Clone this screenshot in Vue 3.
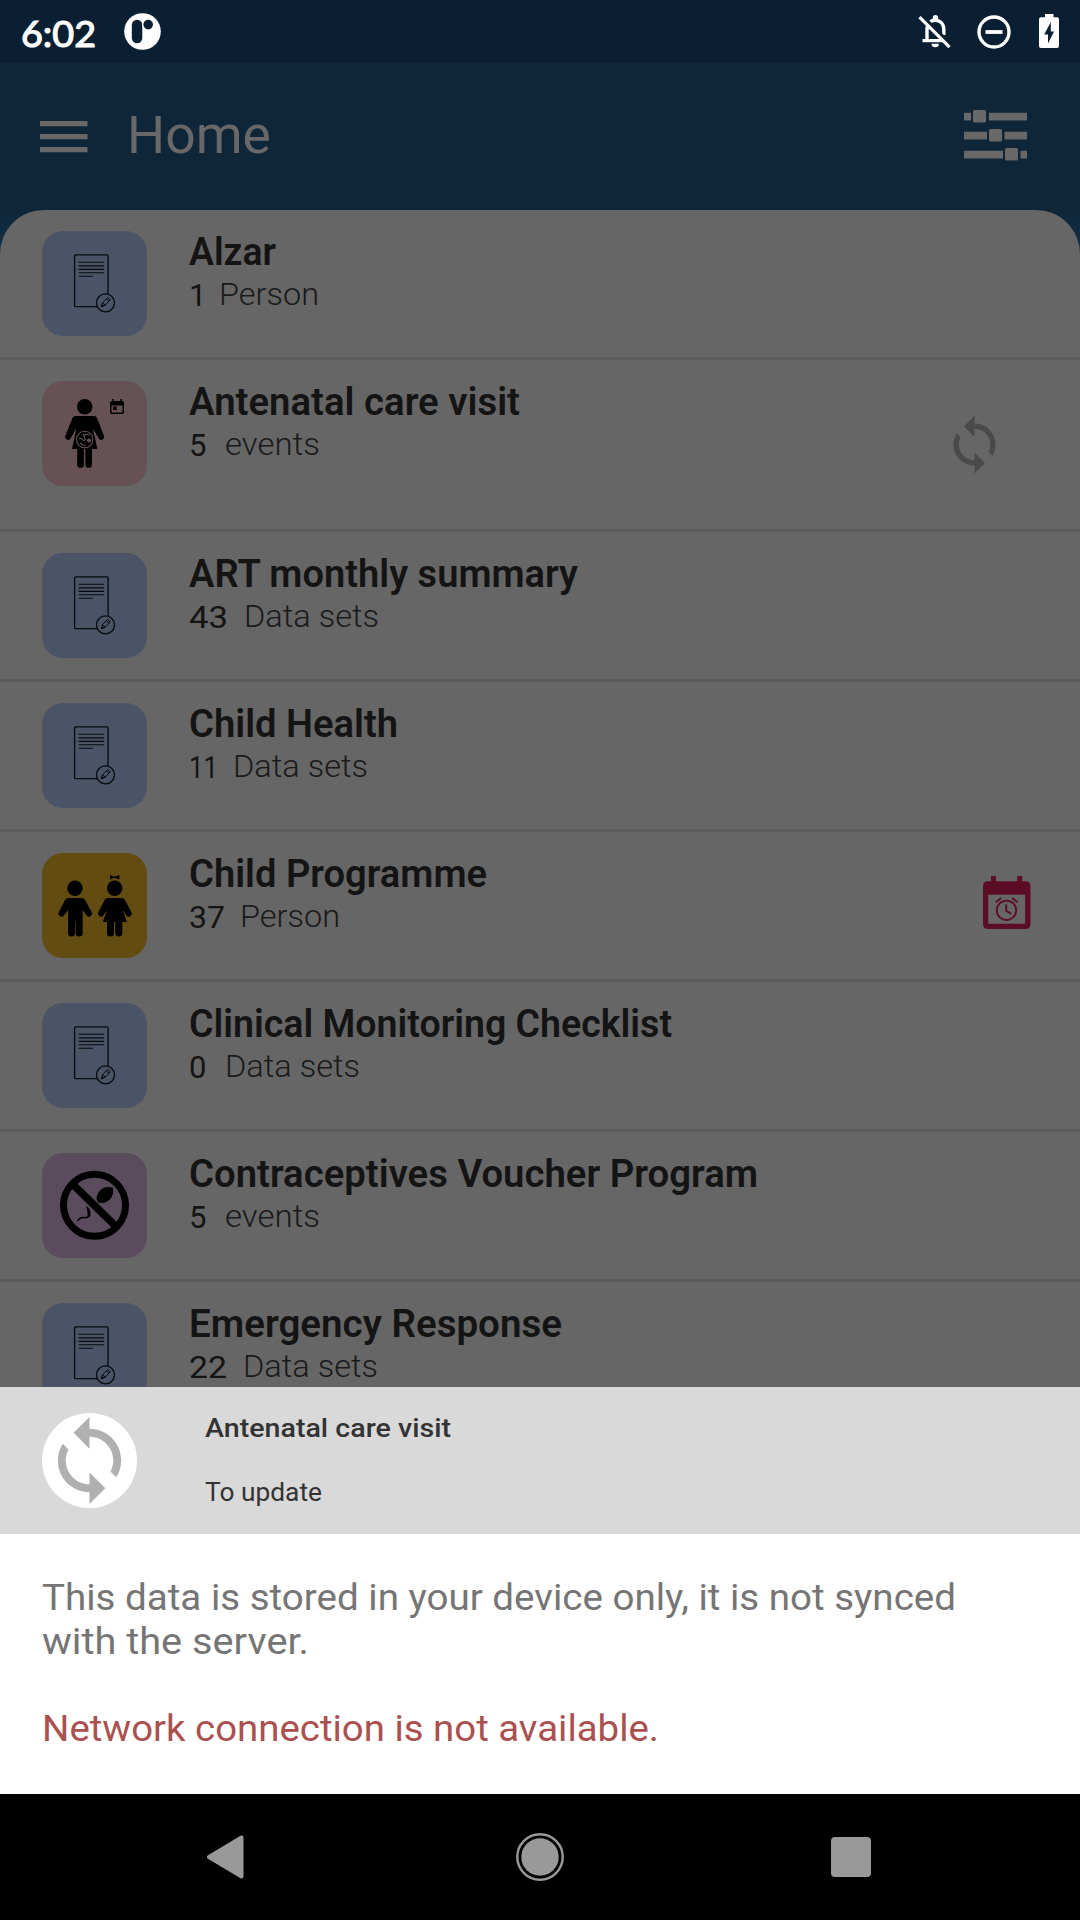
<script setup>
const rows = [
  { icon: 'doc', title: 'Alzar', w: 87, count: '1', cw: 12, gap: 30, unit: 'Person', uw: 100 },
  { icon: 'pregnant', title: 'Antenatal care visit', w: 331, count: '5', cw: 18, gap: 36, unit: 'events', uw: 95, status: 'sync' },
  { icon: 'doc', title: 'ART monthly summary', w: 389, count: '43', cw: 39, gap: 55, unit: 'Data sets', uw: 135 },
  { icon: 'doc', title: 'Child Health', w: 209, count: '11', cw: 29, gap: 44, unit: 'Data sets', uw: 135 },
  { icon: 'kids', title: 'Child Programme', w: 298, count: '37', cw: 36, gap: 51, unit: 'Person', uw: 100, status: 'overdue' },
  { icon: 'doc', title: 'Clinical Monitoring Checklist', w: 483, count: '0', cw: 19, gap: 36, unit: 'Data sets', uw: 135 },
  { icon: 'voucher', title: 'Contraceptives Voucher Program', w: 569, count: '5', cw: 18, gap: 36, unit: 'events', uw: 95 },
  { icon: 'doc', title: 'Emergency Response', w: 373, count: '22', cw: 38, gap: 54, unit: 'Data sets', uw: 135 },
]

// Widens a single line of text so that it spans the given width.
const vFit = {
  mounted(el, { value }) {
    if (el.textContent.length < 2) return
    el.style.transform = `scaleX(${value / el.getBoundingClientRect().width})`
  },
}

const syncPath =
  'M12 4V1L8 5l4 4V6c3.31 0 6 2.69 6 6 0 1.01-.25 1.97-.7 2.8l1.46 1.46C19.54 15.03 20 13.57 20 12c0-4.42-3.58-8-8-8zm0 14c-3.31 0-6-2.69-6-6 0-1.01.25-1.97.7-2.8L5.24 7.74C4.46 8.97 4 10.43 4 12c0 4.42 3.58 8 8 8v3l4-4-4-4v3z'
</script>

<template>
  <div class="screen">
    <header class="status">
      <span class="time"><span v-fit="75" class="fit">6:02</span></span>
      <svg class="app-badge" width="37" height="37" viewBox="0 0 37 37">
        <circle cx="18.5" cy="18.5" r="18.3" fill="#fff" />
        <rect x="7.8" y="6.8" width="10.5" height="23.4" rx="5.2" fill="#0a1f31" />
        <circle cx="24.2" cy="11.6" r="6" fill="#fff" />
        <circle cx="24.2" cy="11.6" r="4.8" fill="#0a1f31" />
      </svg>
      <svg class="bell" width="34" height="36" viewBox="0 0 34 36" fill="none" stroke="#fff">
        <path d="M9 26V15.5C9 9.5 12.500 6.200 17.200 6.200S25.800 9.500 25.800 15.500V21" stroke-width="3.400" />
        <path d="M4.500 26.600H25" stroke-width="3.200" />
        <path d="M14.700 5.500V3.800a2.700 2.700 0 0 1 5.400 0V5.500z" fill="#fff" stroke="none" />
        <path d="M13.500 29.800h7.400a3.700 3.500 0 0 1-7.400 0z" fill="#fff" stroke="none" />
        <path d="M4 1.800L34 31.800" stroke="#0a1f31" stroke-width="3.500" />
        <path d="M1.500 3.200L31.500 33.200" stroke-width="3.200" />
      </svg>
      <svg class="dnd" width="34" height="34" viewBox="0 0 34 34">
        <circle cx="17" cy="17" r="15" fill="none" stroke="#fff" stroke-width="3.400" />
        <rect x="8.500" y="15.100" width="17" height="3.800" fill="#fff" />
      </svg>
      <svg class="battery" width="20" height="34" viewBox="0 0 20 34">
        <path d="M6 0h8.500v3.300H18a2 2 0 0 1 2 2V32a2 2 0 0 1-2 2H2a2 2 0 0 1-2-2V5.300a2 2 0 0 1 2-2h4z" fill="#fff" />
        <path d="M11.800 8L5.200 20.500H9V29.500L15 17.500H11.800z" fill="#0a1f31" />
      </svg>
    </header>

    <div class="toolbar">
      <svg width="48" height="32" viewBox="0 0 48 32" fill="#686868">
        <path d="M0 0h47.500v5.200H0zM0 13h47.500v5.200H0zM0 26h47.500v5.200H0z" />
      </svg>
      <h1><span v-fit="144" class="fit">Home</span></h1>
      <svg width="63" height="51" viewBox="0 0 63 51" fill="#686868">
        <path d="M0 2.800h7v7.700H0zM25 2.800h38v7.700H25zM0 21.800h23v7.700H0zM40.500 21.800H63v7.700H40.500zM0 40.800h39v7.700H0zM56.500 40.800H63v7.700h-6.500z" />
        <rect x="9" y="0" width="13" height="12.500" rx="1.500" />
        <rect x="25" y="19" width="13" height="12.500" rx="1.500" />
        <rect x="41" y="38" width="13" height="12.500" rx="1.500" />
      </svg>
    </div>

    <div class="body">
      <ul class="list">
        <li v-for="row in rows" :key="row.title" :class="{ tall: row.status === 'sync' }">
          <div class="tile" :class="row.icon">
            <svg v-if="row.icon === 'doc'" width="105" height="105" viewBox="0 0 105 105" fill="none" stroke="#07090c">
              <rect x="32.600" y="23.900" width="33.500" height="51.800" rx="1" stroke-width="1.300" />
              <path d="M36.700 31.300H62M36.700 34.900H62M36.700 38.400H62M36.700 41.800H62M36.700 45.300H51" stroke-width="1.100" />
              <circle cx="63.500" cy="71.900" r="9" fill="#4b5467" stroke-width="1.300" />
              <path d="M59.400 75.800l1.200-4.200 5-5.200 2.600 2.400-5 5.400zM64.300 67.700l2.600 2.500M60.600 71.600l2.600 2.600" stroke-width="1" />
              <path d="M59.300 76l.9-3 1.900 2z" fill="#07090c" stroke="none" />
            </svg>

            <svg v-else-if="row.icon === 'pregnant'" width="105" height="105" viewBox="0 0 105 105">
              <circle cx="42.700" cy="25.700" r="7.700" />
              <path d="M33.500 35h18.500q2 0 3 2l6.800 17.500a2.900 2.900 0 0 1-5.200 2.700L51 47.500l4.300 20.500H30l4.300-20.500-5.600 9.700a2.900 2.900 0 0 1-5.200-2.700L30.500 37q1-2 3-2z" />
              <path d="M35.200 66h6.700v17.500a3.350 3.350 0 0 1-6.700 0zM43.300 66h6.700v17.500a3.350 3.350 0 0 1-6.700 0z" />
              <circle cx="42.700" cy="58.500" r="8.200" fill="#000" stroke="#665254" stroke-width="1.100" />
              <path d="M37 58q2-1.500 3.500.5t3-.2q-2-2-.5-4t4.500 0M38 61.500q2 3.500 6 2.500M41 53l2 3" fill="none" stroke="#665254" stroke-width="1.100" />
              <circle cx="47" cy="59.500" r="2.100" fill="#665254" />
              <path d="M68 22q0-2 2-2h10q2 0 2 2v9q0 2-2 2H70q-2 0-2-2zM69.600 24.500v6.900h10.800v-6.900z" fill-rule="evenodd" />
              <path d="M70.200 18h1.500v3h-1.500zM78.300 18h1.500v3h-1.500zM71 25.500h3.800v3.600H71z" />
            </svg>

            <svg v-else-if="row.icon === 'kids'" width="105" height="105" viewBox="0 0 105 105">
              <circle cx="33" cy="35.300" r="7.700" />
              <path d="M26.500 45h13q2.500 0 3.500 2l6.600 12a3 3 0 0 1-5.300 3l-3.600-5v23a3.500 3.500 0 0 1-7 0V69h-.6v11a3.500 3.500 0 0 1-7 0V57l-3.900 5a3 3 0 0 1-5.300-3L23 47q1-2 3.500-2z" />
              <circle cx="72.700" cy="35.300" r="7.700" />
              <path d="M68 22l4 1.500h1.400l4-1.500v4.500l-4-1.500H72l-4 1.500z" />
              <path d="M66 45h13.500q2.500 0 3.500 2l6.300 12a3 3 0 0 1-5.300 3l-3.500-5L85 69H60.700l4.500-12-3.500 5a3 3 0 0 1-5.300-3l6.200-12q1-2 3.400-2z" />
              <path d="M65 68h7v12a3.500 3.500 0 0 1-7 0zM73.300 68h7v12a3.500 3.500 0 0 1-7 0z" />
            </svg>

            <svg v-else width="105" height="105" viewBox="0 0 105 105">
              <circle cx="52.500" cy="52.300" r="31" fill="none" stroke="#000" stroke-width="7" />
              <path d="M31 31.500L74 73.500" stroke="#000" stroke-width="7.500" />
              <path d="M71 34.700q1.200 7-3 11.500t-11 3.600q-3.500-2-2-7 1.500-5 6-7.500 5-2 10-.6z" />
              <path d="M44 53q4.800 2.500 4.500 8-.2 4.500-5 4.400-5.500-.6-8.200 3.900-.5-3.500 3-4.900 2-.8 5-.4 2.700 0 2.300-3-.2-4-1.600-8z" />
            </svg>
          </div>

          <div class="text">
            <div class="title"><span v-fit="row.w" class="fit">{{ row.title }}</span></div>
            <div class="meta">
              <span class="count" :style="{ width: row.gap + 'px' }"><span v-fit="row.cw" class="fit">{{ row.count }}</span></span>
              <span v-fit="row.uw" class="fit unit">{{ row.unit }}</span>
            </div>
          </div>

          <svg v-if="row.status === 'sync'" class="sync" width="63" height="63" viewBox="0 0 24 24" fill="#4a4a4a">
            <path :d="syncPath" />
          </svg>
          <svg v-if="row.status === 'overdue'" class="overdue" width="48" height="54" viewBox="0 0 48 54">
            <path d="M5 5.300h37.500q5 0 5 5V48q0 5-5 5H5q-5 0-5-5V10.300q0-5 5-5zM5.200 18.700v29h36.900v-29z" fill="#5c0d26" fill-rule="evenodd" />
            <path d="M8 0h5v7H8zM34.200 0h5v7h-5z" fill="#5c0d26" />
            <g fill="none" stroke="#5c0d26" stroke-width="1.900">
              <circle cx="23.500" cy="34.300" r="9.700" />
              <path d="M23.200 28.500v6.200l5 3.200M12.800 26.300l5.300-4.300M29.200 22l5.300 4.300" />
            </g>
          </svg>
        </li>
      </ul>
    </div>

    <section class="sheet">
      <div class="sheet-head">
        <div class="disc">
          <svg width="95" height="95" viewBox="0 0 24 24" fill="#b0b0b0"><path :d="syncPath" /></svg>
        </div>
        <div class="sheet-text">
          <strong><span v-fit="246" class="fit">Antenatal care visit</span></strong>
          <div><span v-fit="117" class="fit">To update</span></div>
        </div>
      </div>
      <div class="sheet-body">
        <p><span v-fit="914" class="fit">This data is stored in your device only, it is not synced</span></p>
        <p><span v-fit="267" class="fit">with the server.</span></p>
        <p class="error"><span v-fit="617" class="fit">Network connection is not available.</span></p>
      </div>
    </section>

    <nav class="nav">
      <svg class="back" width="38" height="44" viewBox="0 0 38 44">
        <path d="M34.500 2.500V41.500L2 22z" fill="#999" stroke="#999" stroke-width="4" stroke-linejoin="round" />
      </svg>
      <svg class="home" width="48" height="48" viewBox="0 0 48 48">
        <circle cx="24" cy="24" r="22.700" fill="none" stroke="#999" stroke-width="2.400" />
        <circle cx="24" cy="24" r="18.700" fill="#999" />
      </svg>
      <div class="recent"></div>
    </nav>
  </div>
</template>

<style>
body {
  margin: 0;
}
</style>

<style scoped>
.screen {
  width: 1080px;
  height: 1920px;
  display: flex;
  flex-direction: column;
  overflow: hidden;
  background: #666;
  font-family: Roboto, "Liberation Sans", sans-serif;
  white-space: nowrap;
}
svg {
  display: block;
  flex: none;
}
.fit {
  display: inline-block;
  transform-origin: 0 50%;
}
.status {
  height: 63px;
  flex: none;
  display: flex;
  align-items: flex-start;
  background: #0a1f31;
  color: #fff;
}
.time {
  width: 103px;
  margin-left: 21px;
  font: 400 37px/44px Lato, sans-serif;
  -webkit-text-stroke: 1.2px #fff;
  padding-top: 11px;
}
.app-badge { margin-top: 13px; }
.bell { margin: 14px 0 0 757px; }
.dnd { margin: 14.500px 0 0 25px; }
.battery { margin: 14px 0 0 28px; }
.toolbar {
  height: 147px;
  flex: none;
  display: flex;
  align-items: flex-start;
  background: #0f2638;
}
.toolbar svg { margin: 58px 0 0 40px; }
.toolbar h1 {
  margin: 41px 0 0 39px;
  width: 750px;
  font-size: 51px;
  line-height: 64px;
  font-weight: 400;
  color: #686868;
}
.toolbar h1 + svg { margin: 47px 0 0 87px; }
.body {
  height: 1177px;
  flex: none;
  overflow: hidden;
  background: linear-gradient(#0f2638, #10314a 40px, #10314a);
}
.list {
  margin: 0;
  padding: 0;
  list-style: none;
  background: #666;
  border-radius: 44px 44px 0 0;
}
.list li {
  box-sizing: border-box;
  height: 150px;
  padding: 21px 0 0 42px;
  display: flex;
  align-items: flex-start;
  border-bottom: 3px solid #5b5b5b;
}
.list li.tall { height: 172px; }
.tile {
  width: 105px;
  height: 105px;
  flex: none;
  border-radius: 21px;
  background: #4b5467;
}
.tile.pregnant { background: #665254; }
.tile.kids { background: #624c12; }
.tile.voucher { background: #5a4c5c; }
.text {
  width: 712px;
  margin-left: 42px;
  margin-top: -1px;
  flex: none;
  color: #141414;
}
.title {
  font-size: 38px;
  line-height: 45px;
  font-weight: 600;
}
.meta {
  display: flex;
  font-size: 31px;
  line-height: 40px;
}
.count { padding-top: 1px; }
.unit { font-weight: 300; color: #1a1a1a; }
.sync { margin: 32px 0 0 42px; }
.overdue { margin: 23px 0 0 82px; }
.sheet {
  height: 407px;
  flex: none;
  background: #fff;
}
.sheet-head {
  height: 147px;
  display: flex;
  background: #d9d9d9;
}
.disc {
  width: 95px;
  height: 95px;
  margin: 26px 0 0 42px;
  border-radius: 50%;
  background: #fff;
}
.sheet-text {
  margin: 26px 0 0 68px;
  font-size: 25px;
  line-height: 32px;
  color: #333;
}
.sheet-text strong {
  display: block;
  font-weight: 500;
  margin-bottom: 32px;
}
.sheet-body {
  padding: 42px 0 0 42px;
  font-size: 37px;
  line-height: 44px;
  color: #757575;
}
.sheet-body p { margin: 0; }
.sheet-body .error { margin-top: 43px; color: #ab5050; }
.nav {
  height: 126px;
  flex: none;
  display: flex;
  align-items: center;
  background: #000;
}
.back { margin-left: 207px; }
.home { margin-left: 271px; }
.recent {
  width: 40px;
  height: 40px;
  margin-left: 267px;
  border-radius: 4px;
  background: #999;
}
</style>
